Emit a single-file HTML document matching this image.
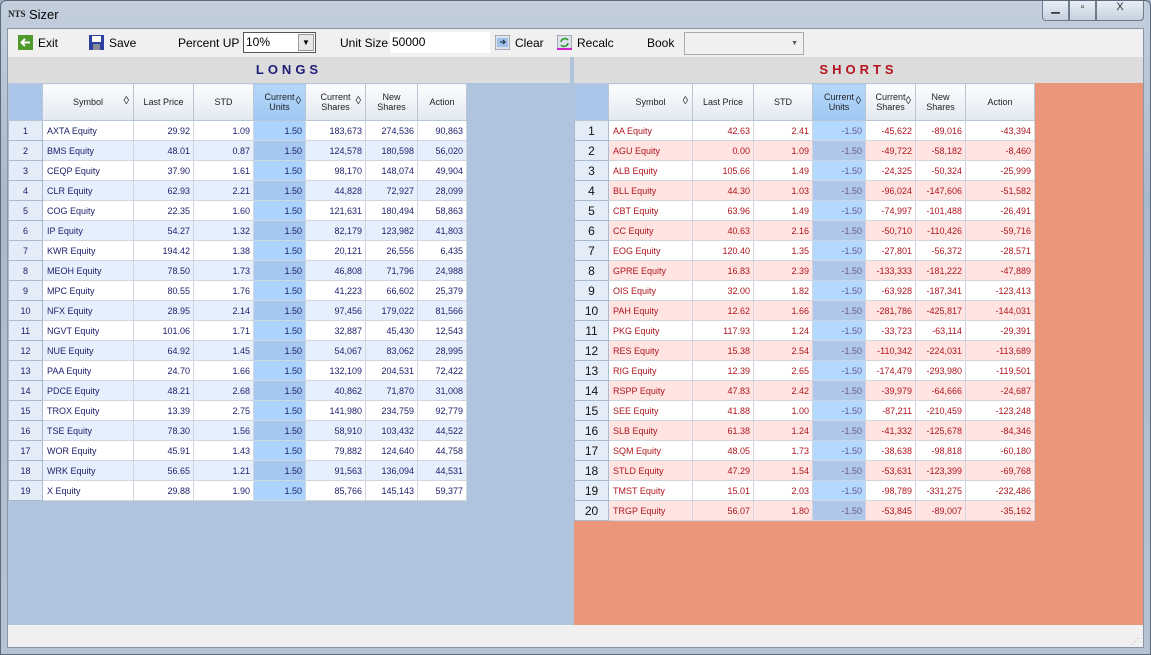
<!DOCTYPE html>
<html><head><meta charset="utf-8"><style>
*{box-sizing:border-box;margin:0;padding:0}
body{width:1151px;height:655px;overflow:hidden;font-family:"Liberation Sans",sans-serif;background:#9fb0c6;position:relative}
.frame{position:absolute;left:0;top:0;width:1151px;height:655px;background:linear-gradient(180deg,#c3cfdc 0%,#a9b9cc 30%,#b6c3d3 100%);border:1px solid #5b6a7c;border-radius:6px 6px 0 0}
.title{position:absolute;left:28px;top:6px;font-size:13px;color:#000}
.logo{position:absolute;left:7px;top:8px;font-size:9px;font-weight:bold;color:#222;font-family:"Liberation Serif",serif}
.ctl{position:absolute;top:0;height:20px;border:1px solid #6d7b8d;border-top:none;background:linear-gradient(#e8eef5,#c5d1de);font-size:11px;text-align:center;color:#333}
.client{position:absolute;left:7px;top:28px;width:1135px;height:618px;background:#f0f0f0;box-shadow:0 0 0 1px #8a96a4}
.tb{position:absolute;top:0;height:28px;font-size:12px;line-height:28px;color:#000}
.ico{position:absolute;top:6px;width:15px;height:15px}
.lp{position:absolute;left:0;top:28px;width:562px;height:568px;background:#b0c4de}
.rp{position:absolute;left:566px;top:28px;width:569px;height:568px;background:#e9967a}
.split{position:absolute;left:562px;top:28px;width:4px;height:568px;background:#b0c4de}
.sh{position:absolute;left:0;top:0;height:26px;background:#dcdcdc;text-align:center;font-weight:bold;font-size:13px;letter-spacing:4px;line-height:26px}
table{position:absolute;top:26px;border-collapse:collapse;table-layout:fixed;font-size:9px}
th{height:37px;font-weight:normal;color:#1e1e1e;background:linear-gradient(#fbfcfd,#e3e9f1);border:1px solid #b9c6d6;font-size:9px;line-height:10px;position:relative}
th.cu{background:linear-gradient(#b5d7fa,#9ec8f2)}
th.corner{background:#a9c5ea}
th .d{position:absolute;right:4px;top:12px;font-size:11px}
td{height:20px;border:1px solid #cfd6df;padding:0 3px;text-align:right;white-space:nowrap}
td.n{background:#e3ecf7;text-align:center;color:#111;font-size:9px;border-color:#aabbd0}
td.s{text-align:left;padding-left:4px}
.L td{color:#1c1c6b}
.L tr.o td{background:#fff}.L tr.e td{background:#e6f0fc}
.L tr td.c{background:#abd3fb}.L tr.e td.c{background:#a4c8f0}
.L tr td.n{background:#e3ecf7}
.R td{color:#b0141e}
.R tr.o td{background:#fff}.R tr.e td{background:#ffe4e1}
.R tr td.c{background:#b3d9ff;color:#6a5a8a}.R tr.e td.c{background:#aec7ea}
.R tr td.n{background:#e3ecf7;color:#111;font-size:12px}
.status{position:absolute;left:0;top:596px;width:1135px;height:22px;background:#f0f0f0}
</style></head><body>
<div class="frame">
<div class="logo">NTS</div><div class="title">Sizer</div>
<div class="ctl" style="left:1041px;width:27px;border-radius:0 0 0 4px">▁</div>
<div class="ctl" style="left:1068px;width:27px">▫</div>
<div class="ctl" style="left:1095px;width:48px;border-radius:0 0 4px 0">X</div>
<div class="client">
<svg class="ico" style="left:10px" viewBox="0 0 15 15"><rect width="15" height="15" fill="#4f9a2a"/><path d="M12 7.5H4M7 4L3.5 7.5 7 11" stroke="#fff" stroke-width="2" fill="none"/></svg>
<div class="tb" style="left:30px">Exit</div>
<svg class="ico" style="left:81px" viewBox="0 0 15 15"><rect width="15" height="15" fill="#2d3fa0"/><rect x="3" y="1" width="9" height="6" fill="#fff"/><rect x="4" y="9" width="7" height="6" fill="#889"/></svg>
<div class="tb" style="left:101px">Save</div>
<div class="tb" style="left:170px">Percent UP</div>
<div style="position:absolute;left:235px;top:3px;width:73px;height:21px;border:1px solid #555;background:#fff;font-size:12px;line-height:19px;padding-left:2px">10%<div style="position:absolute;right:1px;top:1px;width:16px;height:17px;background:#e8e8e8;border:1px solid #999;font-size:8px;text-align:center;line-height:16px">▼</div></div>
<div class="tb" style="left:332px">Unit Size</div>
<div style="position:absolute;left:382px;top:3px;width:100px;height:21px;background:#fff;font-size:12px;line-height:21px;padding-left:2px">50000</div>
<svg class="ico" style="left:487px" viewBox="0 0 15 15"><rect width="15" height="15" fill="#dde3ee" stroke="#777"/><rect x="2" y="3" width="11" height="9" fill="#9fc0e8"/><path d="M5 7h5M8 5l2 2-2 2" stroke="#123" fill="none"/></svg>
<div class="tb" style="left:507px">Clear</div>
<svg class="ico" style="left:549px" viewBox="0 0 15 15"><rect width="15" height="15" fill="#dde3ee" stroke="#777"/><rect x="0" y="13" width="15" height="2" fill="#d020d0"/><path d="M4 7a4 4 0 0 1 7-2M11 8a4 4 0 0 1-7 2" stroke="#2a9a2a" stroke-width="1.6" fill="none"/></svg>
<div class="tb" style="left:569px">Recalc</div>
<div class="tb" style="left:639px">Book</div>
<div style="position:absolute;left:676px;top:3px;width:120px;height:23px;border:1px solid #aaa;background:#f0f0f0;font-size:7px;line-height:21px;text-align:right;padding-right:5px;color:#555">▼</div>

<div class="lp">
<div class="sh" style="width:562px;color:#1e1e7a">LONGS</div>
<table class="L" style="left:0;width:458px">
<colgroup><col style="width:34px"><col style="width:91px"><col style="width:60px"><col style="width:60px"><col style="width:52px"><col style="width:60px"><col style="width:52px"><col style="width:49px"></colgroup>
<tr><th class="corner"></th><th>Symbol<span class="d">◊</span></th><th>Last Price</th><th>STD</th><th class="cu">Current<br>Units<span class="d">◊</span></th><th>Current<br>Shares<span class="d">◊</span></th><th>New<br>Shares</th><th>Action</th></tr>
<tr class="o"><td class="n">1</td><td class="s">AXTA Equity</td><td>29.92</td><td>1.09</td><td class="c">1.50</td><td>183,673</td><td>274,536</td><td>90,863</td></tr>
<tr class="e"><td class="n">2</td><td class="s">BMS Equity</td><td>48.01</td><td>0.87</td><td class="c">1.50</td><td>124,578</td><td>180,598</td><td>56,020</td></tr>
<tr class="o"><td class="n">3</td><td class="s">CEQP Equity</td><td>37.90</td><td>1.61</td><td class="c">1.50</td><td>98,170</td><td>148,074</td><td>49,904</td></tr>
<tr class="e"><td class="n">4</td><td class="s">CLR Equity</td><td>62.93</td><td>2.21</td><td class="c">1.50</td><td>44,828</td><td>72,927</td><td>28,099</td></tr>
<tr class="o"><td class="n">5</td><td class="s">COG Equity</td><td>22.35</td><td>1.60</td><td class="c">1.50</td><td>121,631</td><td>180,494</td><td>58,863</td></tr>
<tr class="e"><td class="n">6</td><td class="s">IP Equity</td><td>54.27</td><td>1.32</td><td class="c">1.50</td><td>82,179</td><td>123,982</td><td>41,803</td></tr>
<tr class="o"><td class="n">7</td><td class="s">KWR Equity</td><td>194.42</td><td>1.38</td><td class="c">1.50</td><td>20,121</td><td>26,556</td><td>6,435</td></tr>
<tr class="e"><td class="n">8</td><td class="s">MEOH Equity</td><td>78.50</td><td>1.73</td><td class="c">1.50</td><td>46,808</td><td>71,796</td><td>24,988</td></tr>
<tr class="o"><td class="n">9</td><td class="s">MPC Equity</td><td>80.55</td><td>1.76</td><td class="c">1.50</td><td>41,223</td><td>66,602</td><td>25,379</td></tr>
<tr class="e"><td class="n">10</td><td class="s">NFX Equity</td><td>28.95</td><td>2.14</td><td class="c">1.50</td><td>97,456</td><td>179,022</td><td>81,566</td></tr>
<tr class="o"><td class="n">11</td><td class="s">NGVT Equity</td><td>101.06</td><td>1.71</td><td class="c">1.50</td><td>32,887</td><td>45,430</td><td>12,543</td></tr>
<tr class="e"><td class="n">12</td><td class="s">NUE Equity</td><td>64.92</td><td>1.45</td><td class="c">1.50</td><td>54,067</td><td>83,062</td><td>28,995</td></tr>
<tr class="o"><td class="n">13</td><td class="s">PAA Equity</td><td>24.70</td><td>1.66</td><td class="c">1.50</td><td>132,109</td><td>204,531</td><td>72,422</td></tr>
<tr class="e"><td class="n">14</td><td class="s">PDCE Equity</td><td>48.21</td><td>2.68</td><td class="c">1.50</td><td>40,862</td><td>71,870</td><td>31,008</td></tr>
<tr class="o"><td class="n">15</td><td class="s">TROX Equity</td><td>13.39</td><td>2.75</td><td class="c">1.50</td><td>141,980</td><td>234,759</td><td>92,779</td></tr>
<tr class="e"><td class="n">16</td><td class="s">TSE Equity</td><td>78.30</td><td>1.56</td><td class="c">1.50</td><td>58,910</td><td>103,432</td><td>44,522</td></tr>
<tr class="o"><td class="n">17</td><td class="s">WOR Equity</td><td>45.91</td><td>1.43</td><td class="c">1.50</td><td>79,882</td><td>124,640</td><td>44,758</td></tr>
<tr class="e"><td class="n">18</td><td class="s">WRK Equity</td><td>56.65</td><td>1.21</td><td class="c">1.50</td><td>91,563</td><td>136,094</td><td>44,531</td></tr>
<tr class="o"><td class="n">19</td><td class="s">X Equity</td><td>29.88</td><td>1.90</td><td class="c">1.50</td><td>85,766</td><td>145,143</td><td>59,377</td></tr>
</table>
</div>
<div class="split"></div>
<div class="rp">
<div class="sh" style="width:569px;color:#b4141e">SHORTS</div>
<table class="R" style="left:0;width:460px">
<colgroup><col style="width:34px"><col style="width:84px"><col style="width:61px"><col style="width:59px"><col style="width:53px"><col style="width:50px"><col style="width:50px"><col style="width:69px"></colgroup>
<tr><th class="corner"></th><th>Symbol<span class="d">◊</span></th><th>Last Price</th><th>STD</th><th class="cu">Current<br>Units<span class="d">◊</span></th><th>Current<br>Shares<span class="d">◊</span></th><th>New Shares</th><th>Action</th></tr>
<tr class="o"><td class="n">1</td><td class="s">AA Equity</td><td>42.63</td><td>2.41</td><td class="c">-1.50</td><td>-45,622</td><td>-89,016</td><td>-43,394</td></tr>
<tr class="e"><td class="n">2</td><td class="s">AGU Equity</td><td>0.00</td><td>1.09</td><td class="c">-1.50</td><td>-49,722</td><td>-58,182</td><td>-8,460</td></tr>
<tr class="o"><td class="n">3</td><td class="s">ALB Equity</td><td>105.66</td><td>1.49</td><td class="c">-1.50</td><td>-24,325</td><td>-50,324</td><td>-25,999</td></tr>
<tr class="e"><td class="n">4</td><td class="s">BLL Equity</td><td>44.30</td><td>1.03</td><td class="c">-1.50</td><td>-96,024</td><td>-147,606</td><td>-51,582</td></tr>
<tr class="o"><td class="n">5</td><td class="s">CBT Equity</td><td>63.96</td><td>1.49</td><td class="c">-1.50</td><td>-74,997</td><td>-101,488</td><td>-26,491</td></tr>
<tr class="e"><td class="n">6</td><td class="s">CC Equity</td><td>40.63</td><td>2.16</td><td class="c">-1.50</td><td>-50,710</td><td>-110,426</td><td>-59,716</td></tr>
<tr class="o"><td class="n">7</td><td class="s">EOG Equity</td><td>120.40</td><td>1.35</td><td class="c">-1.50</td><td>-27,801</td><td>-56,372</td><td>-28,571</td></tr>
<tr class="e"><td class="n">8</td><td class="s">GPRE Equity</td><td>16.83</td><td>2.39</td><td class="c">-1.50</td><td>-133,333</td><td>-181,222</td><td>-47,889</td></tr>
<tr class="o"><td class="n">9</td><td class="s">OIS Equity</td><td>32.00</td><td>1.82</td><td class="c">-1.50</td><td>-63,928</td><td>-187,341</td><td>-123,413</td></tr>
<tr class="e"><td class="n">10</td><td class="s">PAH Equity</td><td>12.62</td><td>1.66</td><td class="c">-1.50</td><td>-281,786</td><td>-425,817</td><td>-144,031</td></tr>
<tr class="o"><td class="n">11</td><td class="s">PKG Equity</td><td>117.93</td><td>1.24</td><td class="c">-1.50</td><td>-33,723</td><td>-63,114</td><td>-29,391</td></tr>
<tr class="e"><td class="n">12</td><td class="s">RES Equity</td><td>15.38</td><td>2.54</td><td class="c">-1.50</td><td>-110,342</td><td>-224,031</td><td>-113,689</td></tr>
<tr class="o"><td class="n">13</td><td class="s">RIG Equity</td><td>12.39</td><td>2.65</td><td class="c">-1.50</td><td>-174,479</td><td>-293,980</td><td>-119,501</td></tr>
<tr class="e"><td class="n">14</td><td class="s">RSPP Equity</td><td>47.83</td><td>2.42</td><td class="c">-1.50</td><td>-39,979</td><td>-64,666</td><td>-24,687</td></tr>
<tr class="o"><td class="n">15</td><td class="s">SEE Equity</td><td>41.88</td><td>1.00</td><td class="c">-1.50</td><td>-87,211</td><td>-210,459</td><td>-123,248</td></tr>
<tr class="e"><td class="n">16</td><td class="s">SLB Equity</td><td>61.38</td><td>1.24</td><td class="c">-1.50</td><td>-41,332</td><td>-125,678</td><td>-84,346</td></tr>
<tr class="o"><td class="n">17</td><td class="s">SQM Equity</td><td>48.05</td><td>1.73</td><td class="c">-1.50</td><td>-38,638</td><td>-98,818</td><td>-60,180</td></tr>
<tr class="e"><td class="n">18</td><td class="s">STLD Equity</td><td>47.29</td><td>1.54</td><td class="c">-1.50</td><td>-53,631</td><td>-123,399</td><td>-69,768</td></tr>
<tr class="o"><td class="n">19</td><td class="s">TMST Equity</td><td>15.01</td><td>2.03</td><td class="c">-1.50</td><td>-98,789</td><td>-331,275</td><td>-232,486</td></tr>
<tr class="e"><td class="n">20</td><td class="s">TRGP Equity</td><td>56.07</td><td>1.80</td><td class="c">-1.50</td><td>-53,845</td><td>-89,007</td><td>-35,162</td></tr>
</table>
</div>
<div class="status"><span style="position:absolute;right:4px;bottom:1px;font-size:8px;color:#999">⋰</span></div>
</div>
</div>
</body></html>
